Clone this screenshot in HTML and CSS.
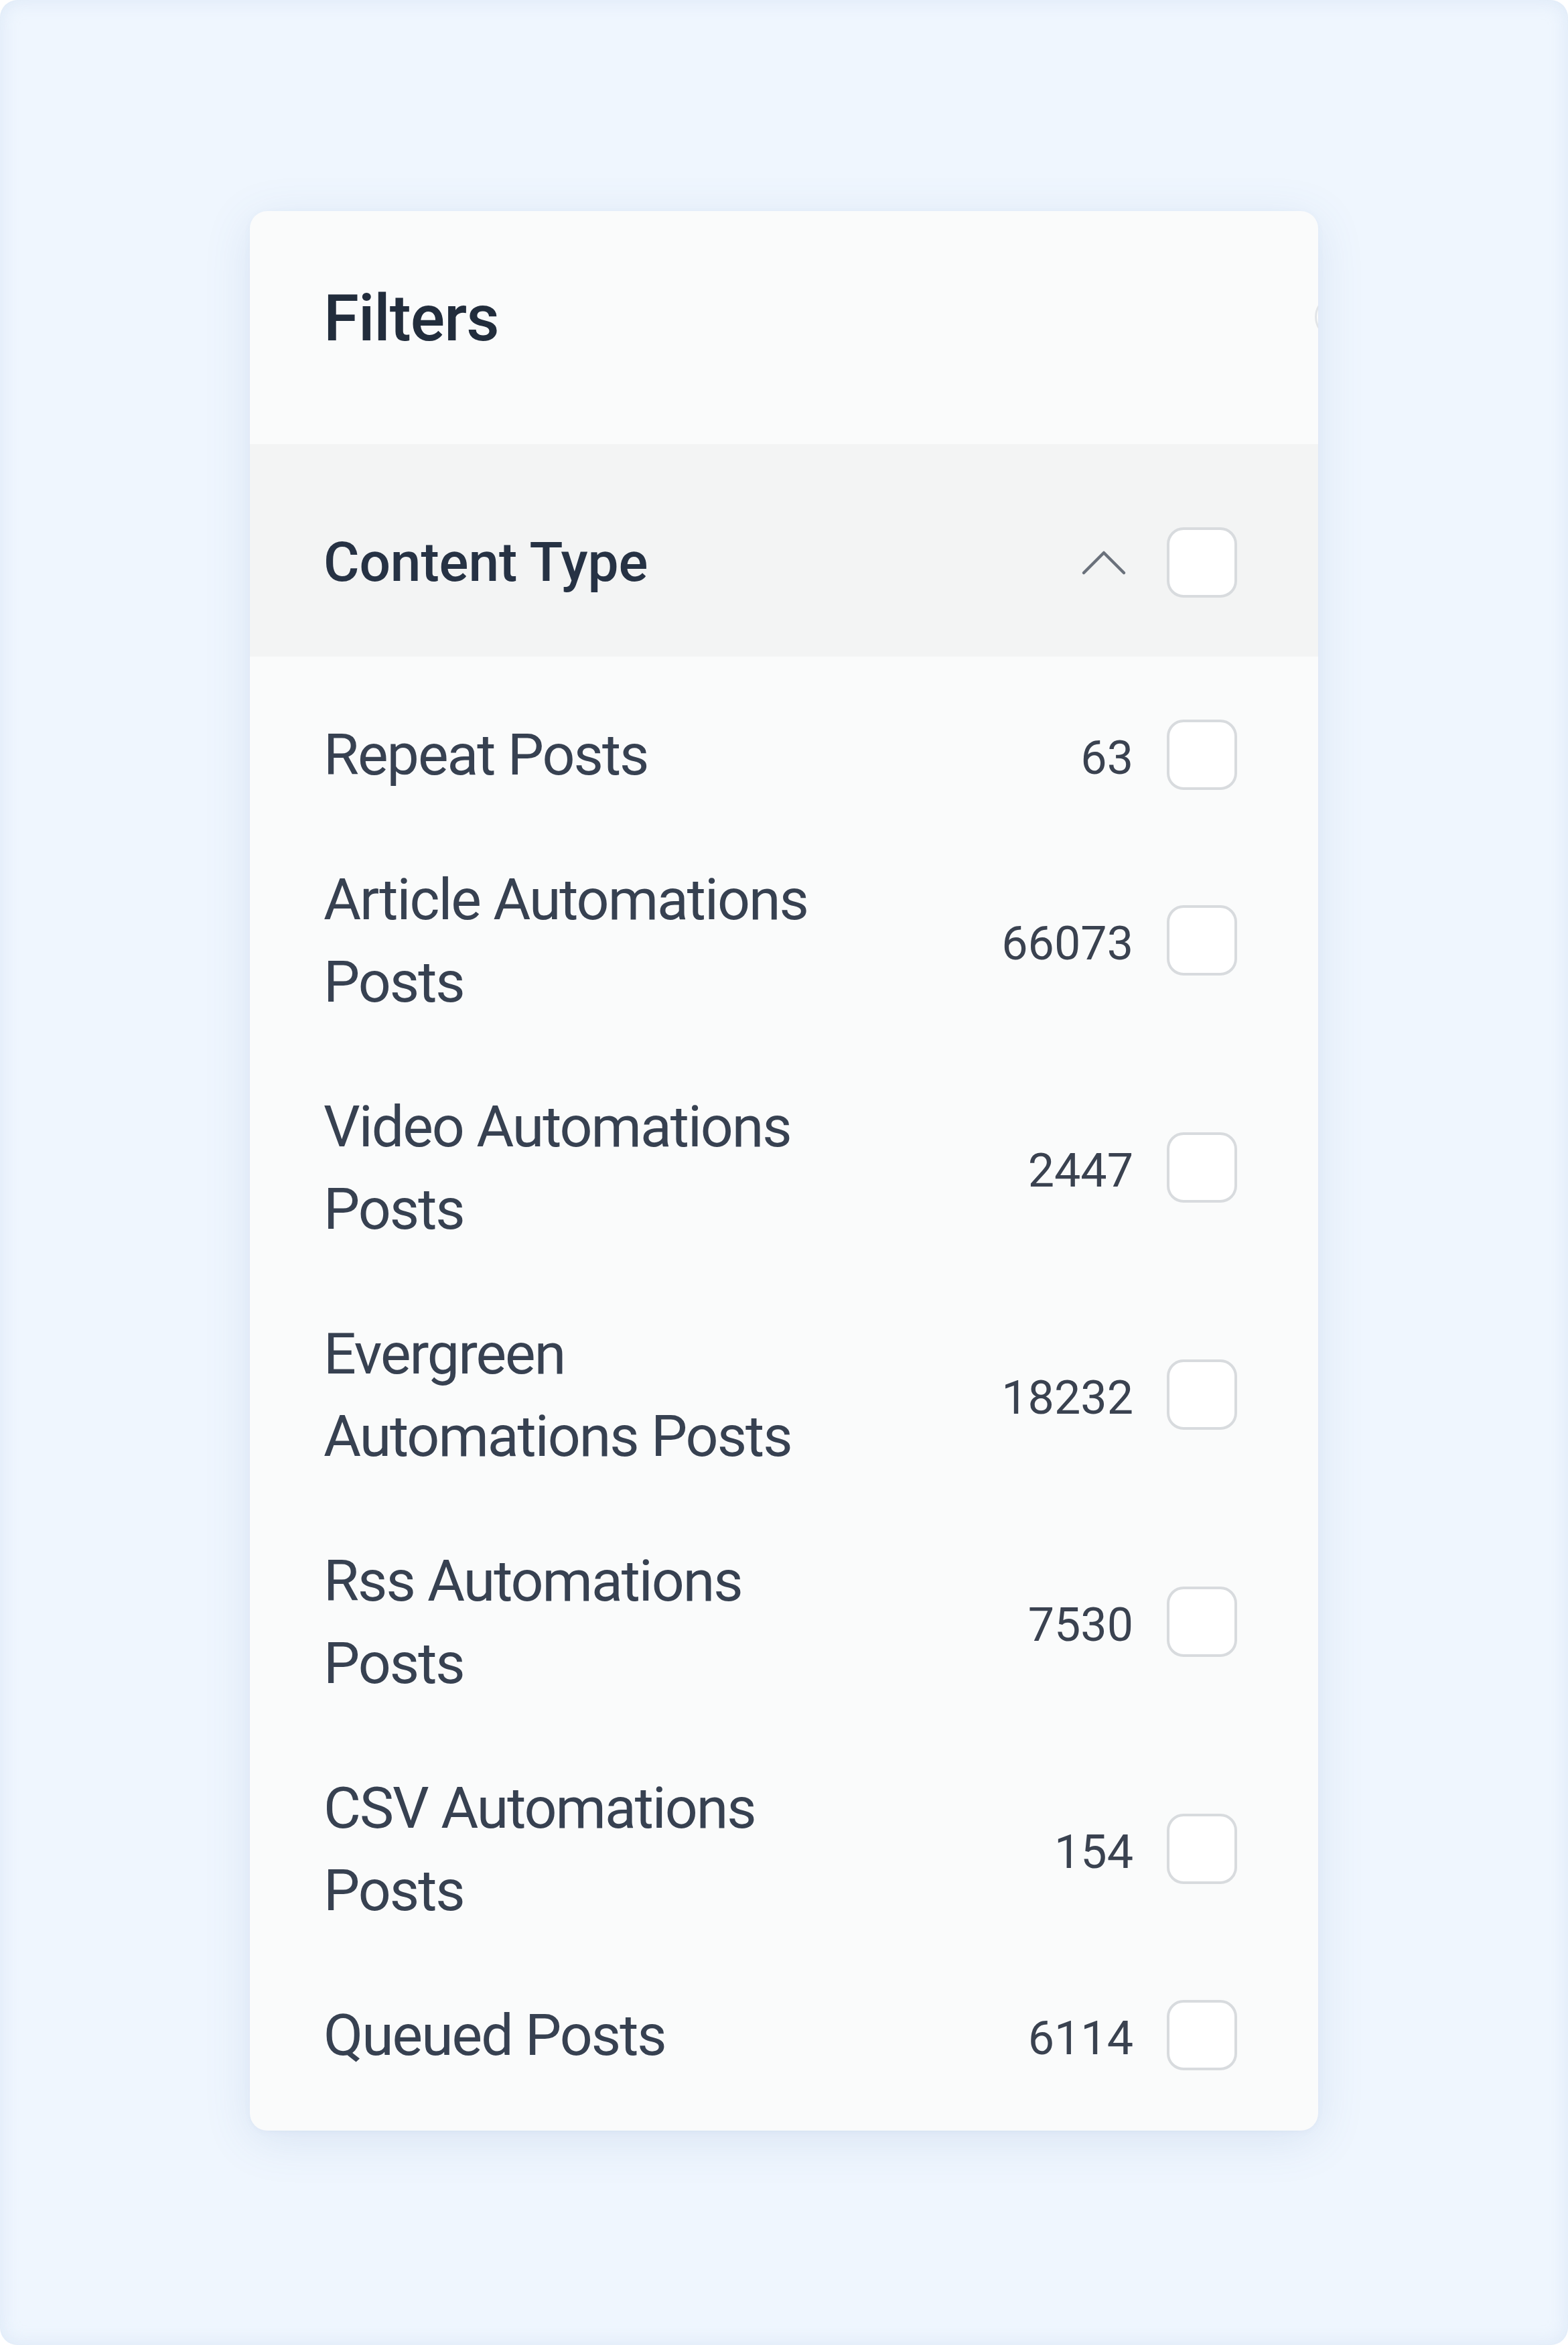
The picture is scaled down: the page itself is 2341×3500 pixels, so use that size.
FILE: index.html
```html
<!DOCTYPE html>
<html lang="en">
<head>
<meta charset="utf-8">
<title>Filters</title>
<link rel="stylesheet" href="styles.css">
</head>
<body>
<div class="frame">
  <aside class="filter-card">
    <header class="card-head">
      <h2 class="card-title">Filters</h2>
      <span class="head-btn"></span>
    </header>

    <div class="group-head">
      <span class="group-title">Content Type</span>
      <svg class="chevron" viewBox="0 0 68 40" width="68" height="40" aria-hidden="true">
        <polyline points="4,35 34,5 64,35" fill="none" stroke="#6a717b" stroke-width="4.5" stroke-linecap="round" stroke-linejoin="round"/>
      </svg>
      <span class="check"></span>
    </div>

    <ul class="options">
      <li class="option"><span class="label">Repeat Posts</span><span class="count">63</span><span class="check"></span></li>
      <li class="option"><span class="label">Article Automations Posts</span><span class="count">66073</span><span class="check"></span></li>
      <li class="option"><span class="label">Video Automations Posts</span><span class="count">2447</span><span class="check"></span></li>
      <li class="option"><span class="label">Evergreen Automations Posts</span><span class="count">18232</span><span class="check"></span></li>
      <li class="option"><span class="label">Rss Automations Posts</span><span class="count">7530</span><span class="check"></span></li>
      <li class="option"><span class="label">CSV Automations Posts</span><span class="count">154</span><span class="check"></span></li>
      <li class="option"><span class="label">Queued Posts</span><span class="count">6114</span><span class="check"></span></li>
    </ul>
  </aside>
</div>
</body>
</html>
```

FILE: styles.css
```css
html, body {
  margin: 0;
  padding: 0;
  background: #ffffff;
}

body {
  font-family: Roboto, "Liberation Sans", Arial, sans-serif;
  color: #374151;
}

/* page surface */
.frame {
  width: 2341px;
  height: 3500px;
  box-sizing: border-box;
  border-radius: 26px;
  background: #eff6fe;
  box-shadow: inset 0 0 28px rgba(170, 195, 228, 0.28);
  padding: 315px 0 0 373px;
  display: flex;
  align-items: flex-start;
}

/* filter panel */
.filter-card {
  width: 1595px;
  background: #fafbfb;
  border-radius: 26px;
  overflow: hidden;
  position: relative;
  box-shadow: 0 14px 70px rgba(70, 110, 170, 0.13), 0 2px 10px rgba(70, 110, 170, 0.05);
}

.card-head {
  height: 348px;
  box-sizing: border-box;
  padding: 103px 110px 0;
}

.card-title {
  margin: 0;
  font-size: 96px;
  line-height: 115px;
  font-weight: 500;
  letter-spacing: -1px;
  color: #222d3c;
}

/* close control sitting past the right edge, clipped by the card */
.head-btn {
  position: absolute;
  top: 125px;
  left: 1590px;
  width: 66px;
  height: 66px;
  border: 3px solid #e2e5e8;
  border-radius: 50%;
  box-sizing: border-box;
}

.group-head {
  height: 317px;
  box-sizing: border-box;
  padding: 36px 121px 0 110px;
  background: #f3f4f4;
  display: flex;
  align-items: center;
}

.group-title {
  flex: 1;
  font-size: 82px;
  line-height: 123px;
  font-weight: 500;
  letter-spacing: -0.1px;
  color: #263244;
}

.chevron {
  display: block;
  margin-right: 60px;
}

.check {
  flex: none;
  width: 105px;
  height: 105px;
  box-sizing: border-box;
  border: 4px solid #d8dbde;
  border-radius: 25px;
  background: #ffffff;
}

.options {
  list-style: none;
  margin: 0;
  padding: 38px 121px 35px 110px;
}

.option {
  display: flex;
  align-items: center;
  padding: 46.5px 0;
}

.label {
  flex: 0 1 auto;
  max-width: 780px;
  font-size: 86px;
  line-height: 123px;
  letter-spacing: -2px;
  color: #374151;
}

.count {
  margin-left: auto;
  margin-right: 50px;
  padding-top: 10px;
  font-size: 70px;
  line-height: 113px;
  color: #3a4250;
}
```
